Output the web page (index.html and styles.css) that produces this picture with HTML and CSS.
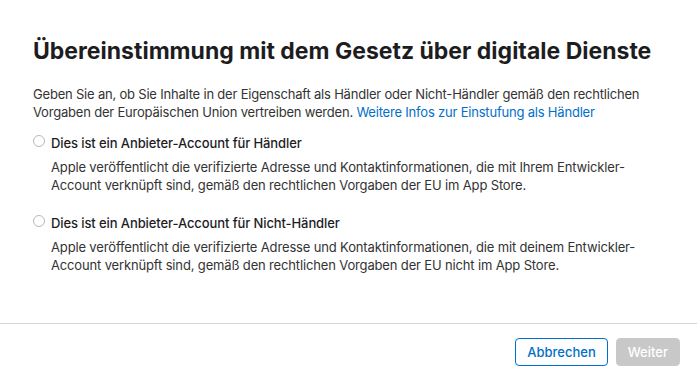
FILE: index.html
```html
<!DOCTYPE html>
<html lang="de">
<head>
    <meta charset="UTF-8">
    <title>Gesetz über digitale Dienste</title>
    <link rel="stylesheet" href="styles.css">
</head>
<body>
    <div class="dialog">
        <div class="content">
            <h1 class="title">Übereinstimmung mit dem Gesetz über digitale Dienste</h1>
            <p class="intro">Geben Sie an, ob Sie Inhalte in der Eigenschaft als Händler oder Nicht-Händler gemäß den rechtlichen Vorgaben der Europäischen Union vertreiben werden. <a href="#">Weitere Infos zur Einstufung als Händler</a></p>

            <label class="option">
                <span class="option-head">
                    <input type="radio" name="trader" class="radio">
                    <span class="option-title">Dies ist ein Anbieter-Account für Händler</span>
                </span>
                <span class="option-text">Apple veröffentlicht die verifizierte Adresse und Kontaktinformationen, die mit Ihrem Entwickler-Account verknüpft sind, gemäß den rechtlichen Vorgaben der EU im App Store.</span>
            </label>

            <label class="option">
                <span class="option-head">
                    <input type="radio" name="trader" class="radio">
                    <span class="option-title">Dies ist ein Anbieter-Account für Nicht-Händler</span>
                </span>
                <span class="option-text">Apple veröffentlicht die verifizierte Adresse und Kontaktinformationen, die mit deinem Entwickler-Account verknüpft sind, gemäß den rechtlichen Vorgaben der EU nicht im App Store.</span>
            </label>
        </div>
        <div class="footer">
            <button class="btn btn-outline">Abbrechen</button>
            <button class="btn btn-disabled" disabled>Weiter</button>
        </div>
    </div>
</body>
</html>
```

FILE: styles.css
```css
body, html {
    margin: 0;
    height: 100%;
    background-color: #fff;
    font-family: Inter, "Noto Sans", sans-serif;
    color: #333;
    overflow: hidden;
}

.dialog {
    height: 100%;
    display: flex;
    flex-direction: column;
}

.content {
    padding: 35px 33px 0 33px;
    flex: 1;
}

.title {
    margin: 0 0 18px 0;
    font-size: 23px;
    line-height: 32px;
    font-weight: 700;
    color: #1d1d1f;
}

.intro {
    margin: 0 0 11px 0;
    font-size: 13px;
    line-height: 18px;
    letter-spacing: -0.2px;
}

.intro a {
    color: #0070c9;
    text-decoration: none;
}

.option {
    display: flex;
    flex-direction: column;
    margin-bottom: 18px;
}

.option-head {
    display: flex;
    align-items: center;
    gap: 6px;
    height: 22px;
}

.radio {
    appearance: none;
    margin: 0;
    width: 12px;
    height: 12px;
    border: 1px solid #b8b8b8;
    border-radius: 50%;
    background: #fff;
    position: relative;
    top: -2px;
    box-sizing: border-box;
}

.option-title {
    font-size: 13px;
    font-weight: 500;
    color: #1d1d1f;
    letter-spacing: -0.1px;
}

.option-text {
    padding-left: 18px;
    margin-top: 4px;
    font-size: 13px;
    line-height: 18px;
    letter-spacing: -0.15px;
}

.footer {
    border-top: 1px solid #d6d6d6;
    height: 56px;
    display: flex;
    justify-content: flex-end;
    align-items: center;
    gap: 8px;
    padding: 0 17px 0 0;
}

.btn {
    height: 28px;
    padding: 0 11px;
    font-family: inherit;
    font-size: 13px;
    font-weight: 500;
    border-radius: 4px;
}

.btn-outline {
    background: #fff;
    color: #0070c9;
    border: 1px solid #0070c9;
}

.btn-disabled {
    background: #c8c8c8;
    color: #fff;
    border: 1px solid #c8c8c8;
}
```
